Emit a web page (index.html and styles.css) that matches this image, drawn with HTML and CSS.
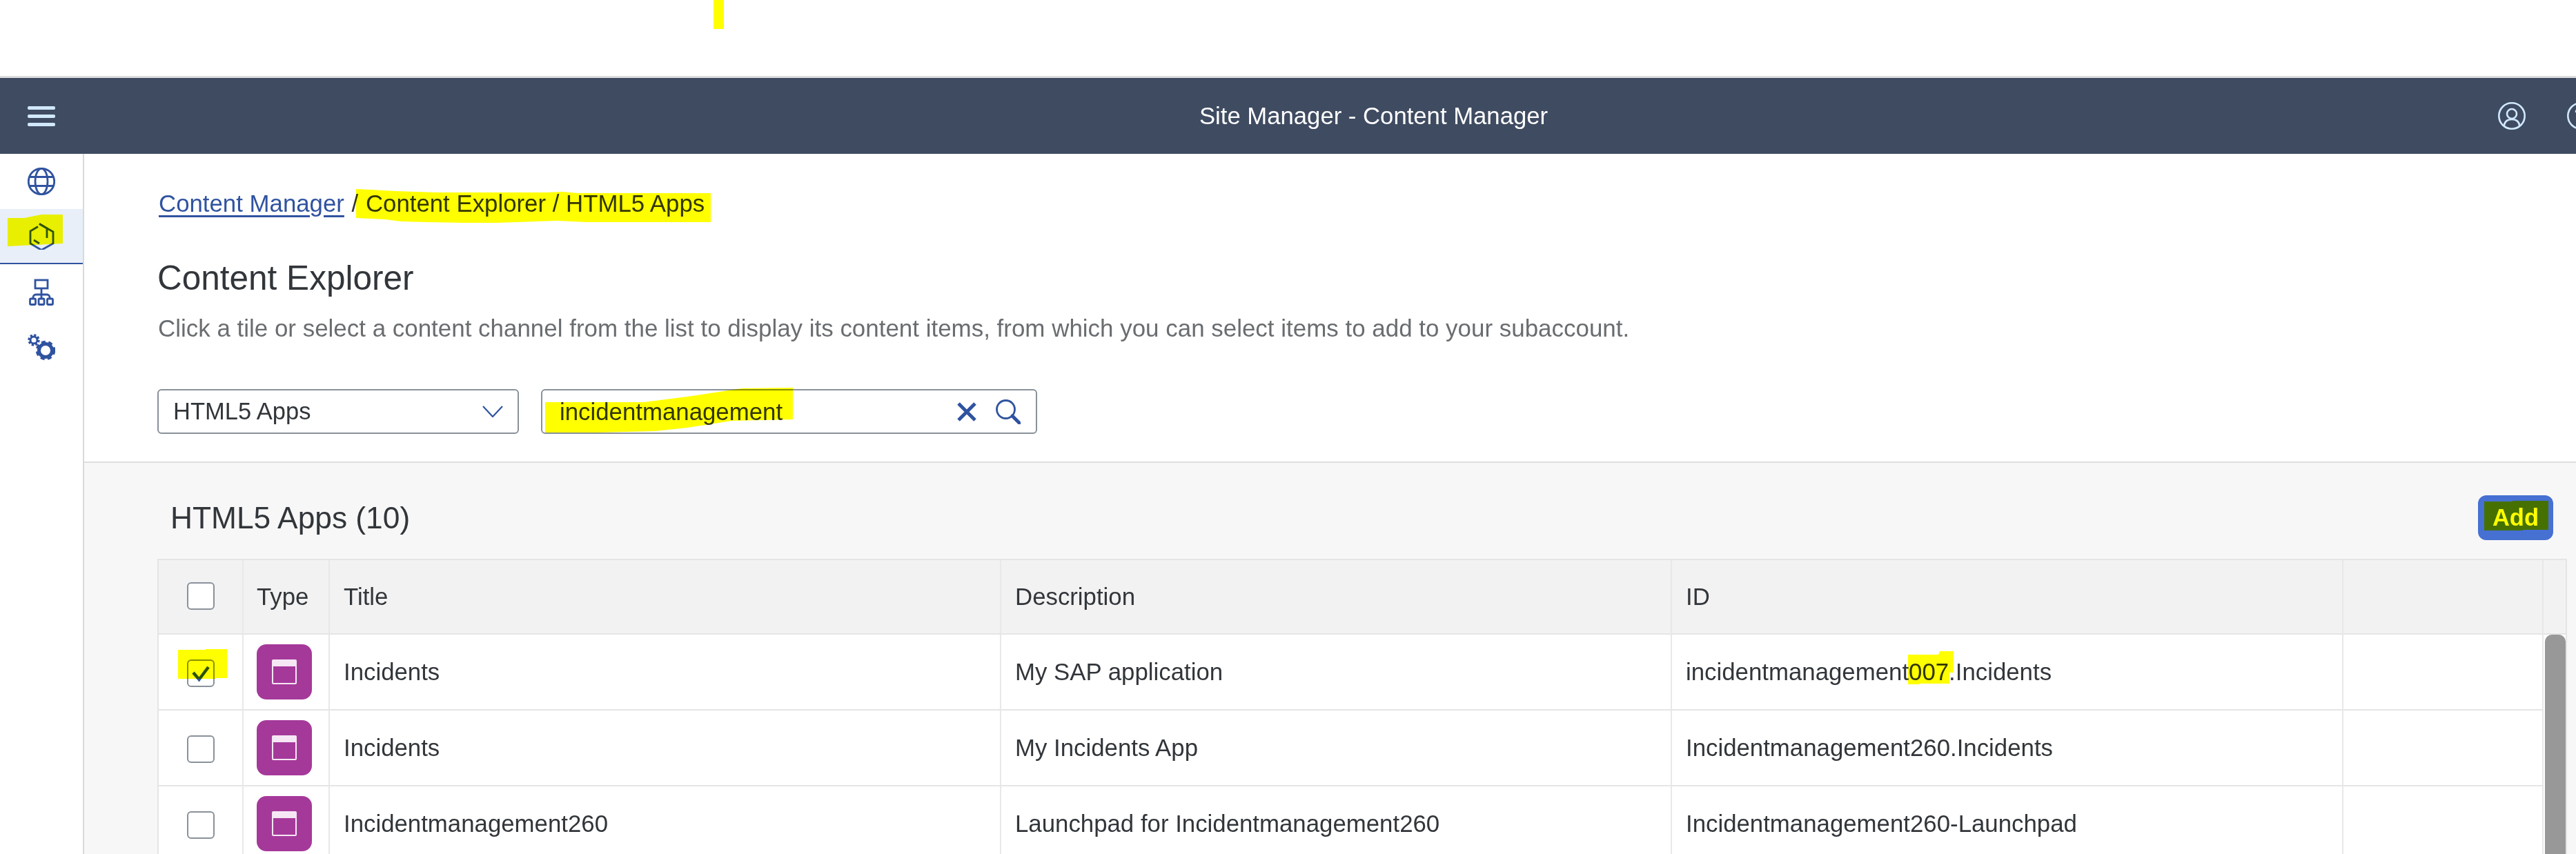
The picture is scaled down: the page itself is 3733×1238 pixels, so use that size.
FILE: index.html
```html
<!DOCTYPE html>
<html lang="en">
<head>
<meta charset="utf-8">
<title>Site Manager - Content Manager</title>
<link rel="stylesheet" href="styles.css">
</head>
<body>
<div class="page">
  <div class="top-band"></div>
  <header class="shell">
    <div class="hamburger"><span></span><span></span><span></span></div>
    <div class="shell-title">Site Manager - Content Manager</div>
    <svg class="shell-user" viewBox="0 0 40 40" width="40" height="40"><circle cx="20" cy="20" r="18.7"/><circle cx="20" cy="17" r="7"/><path d="M8.5 35c1-7 5.500-10 11.500-10s10.500 3 11.500 10"/></svg>
    <svg class="shell-help" viewBox="0 0 40 40" width="40" height="40"><circle cx="20" cy="20" r="18.700"/><path d="M13 15c0-4 3-7 7-7s7 3 7 7-7 5-7 11"/><circle cx="20" cy="31" r="1"/></svg>
  </header>
  <div class="main">
    <nav class="side">
      <div class="side-item first">
        <svg class="ico" viewBox="0 0 40 40" width="40" height="40"><circle cx="20" cy="20" r="18.700"/><ellipse cx="20" cy="20" rx="9" ry="18.700"/><path d="M2 13.500h36M2 26.500h36"/></svg>
      </div>
      <div class="side-item active">
        <svg class="ico" viewBox="0 0 40 40" width="40" height="40"><path d="M17 2.500 37 14v17L20 40.500 4 31V13l11-6.500"/><path d="M17 2.500 28 9v14M9 26l8 5"/></svg>
      </div>
      <div class="side-item org">
        <svg class="ico" viewBox="0 0 40 40" width="40" height="40"><rect x="11" y="2" width="18" height="12"/><path d="M20 14v9M8 30v-3a4 4 0 0 1 4-4h16a4 4 0 0 1 4 4v3M20 23v7"/><rect x="3.500" y="29" width="8" height="8.500" rx="1.500"/><rect x="16" y="29" width="8" height="8.500" rx="1.500"/><rect x="28.500" y="29" width="8" height="8.500" rx="1.500"/></svg>
      </div>
      <div class="side-item gears">
        <svg class="ico" viewBox="0 0 40 40" width="40" height="40"><circle class="g1" cx="9" cy="10" r="5"/><circle class="t1" cx="9" cy="10" r="7.200"/><circle class="g2" cx="26" cy="25" r="9.500"/><circle class="t2" cx="26" cy="25" r="12.500"/></svg>
      </div>
    </nav>
    <div class="content">
      <section class="intro">
        <div class="crumbs"><a class="crumb-link" href="#">Content Manager</a> <span class="crumb-sep">/</span> <span class="crumb-cur">Content Explorer / HTML5 Apps</span></div>
        <h1 class="page-title">Content Explorer</h1>
        <p class="page-sub">Click a tile or select a content channel from the list to display its content items, from which you can select items to add to your subaccount.</p>
        <div class="controls">
          <div class="field select">
            <span>HTML5 Apps</span>
            <svg class="chev" viewBox="0 0 30 17" width="30" height="17"><path d="M1 1l14 15L29 1"/></svg>
          </div>
          <div class="field search">
            <span class="search-text">incidentmanagement</span>
            <svg class="clear" viewBox="0 0 28 28" width="28" height="28"><path d="M2 2l24 24M26 2 2 26"/></svg>
            <svg class="mag" viewBox="0 0 36 36" width="36" height="36"><circle cx="14.500" cy="14.500" r="13"/><path class="handle" d="M24 24l10 10"/></svg>
          </div>
        </div>
      </section>
      <section class="panel">
        <div class="panel-head">
          <h2 class="panel-title">HTML5 Apps (10)</h2>
          <button class="add" type="button">Add</button>
        </div>
        <div class="table-box">
          <table class="apps">
            <colgroup><col class="c1"><col class="c2"><col class="c3"><col class="c4"><col class="c5"><col class="c6"></colgroup>
            <thead>
              <tr><th><span class="cb"></span></th><th>Type</th><th>Title</th><th>Description</th><th>ID</th><th></th></tr>
            </thead>
            <tbody>
              <tr>
                <td><span class="cb"><svg viewBox="0 0 36 36" width="36" height="36"><path d="M7 17l8.500 10L29 9"/></svg></span></td>
                <td><span class="tile"><span class="win"></span></span></td>
                <td>Incidents</td><td>My SAP application</td><td>incidentmanagement007.Incidents</td><td></td>
              </tr>
              <tr>
                <td><span class="cb"></span></td>
                <td><span class="tile"><span class="win"></span></span></td>
                <td>Incidents</td><td>My Incidents App</td><td>Incidentmanagement260.Incidents</td><td></td>
              </tr>
              <tr>
                <td><span class="cb"></span></td>
                <td><span class="tile"><span class="win"></span></span></td>
                <td>Incidentmanagement260</td><td>Launchpad for Incidentmanagement260</td><td>Incidentmanagement260-Launchpad</td><td></td>
              </tr>
            </tbody>
          </table>
          <div class="scroll"><div class="scroll-head"></div><div class="thumb"></div></div>
        </div>
      </section>
    </div>
  </div>
  <svg class="marks" viewBox="0 0 3733 1238" width="3733" height="1238">
    <rect x="1034" y="0" width="15" height="42"/>
    <polygon points="516,274 538,275 573,277 633,279 791,279 815,278 838,280 1030,280 1030,322 850,322 807,320 720,323 672,323 617,322 581,321 558,318 516,316"/>
    <polygon points="11,316 35,316 60,311 91,311 91,353 11,357"/>
    <polygon points="790,583 933,583 996,575 1075,563 1149,562 1149,608 1060,610 996,620 949,625 866,627 790,627"/>
    <polygon points="258,942 298,942 298,941 329,941 329,983 313,983 313,984 258,984"/>
    <polygon points="3600,727 3641,727 3641,726 3693,726 3693,768 3656,768 3656,769 3600,769"/>
    <polygon points="2765,949 2809,949 2811,944 2831,944 2831,975 2825,975 2825,991 2782,991 2782,992 2765,992"/>
  </svg>
</div>
</body>
</html>
```

FILE: styles.css
```css
* { box-sizing: border-box; }
html, body { margin: 0; padding: 0; background: #fff; }
body { font-family: "Liberation Sans", Arial, sans-serif; font-size: 34.8px; color: #32363a; }
.page { position: relative; width: 3733px; height: 1238px; overflow: hidden; }
.top-band { height: 113px; border-bottom: 3px solid #dedede; }
.shell { position: relative; height: 110px; padding-left: 248px; background: #3f4b61; display: flex; align-items: center; justify-content: center; }
.hamburger { position: absolute; left: 40px; top: 41px; width: 40px; display: flex; flex-direction: column; gap: 7px; }
.hamburger span { display: block; height: 5px; border-radius: 2px; background: #d1e8ff; }
.shell-title { color: #fff; font-size: 34.7px; }
.shell-user, .shell-help { position: absolute; top: 35px; fill: none; stroke: #d1e8ff; stroke-width: 2.6; }
.shell-user { left: 3620px; }
.shell-help { left: 3720px; }
.main { display: flex; height: 1015px; }
.side { width: 122px; flex: none; border-right: 2px solid #d9d9d9; }
.side-item { display: flex; align-items: center; justify-content: center; width: 120px; }
.side-item.first { height: 80px; }
.side-item.active { height: 80px; background: #e8eff8; border-bottom: 2px solid #3053a0; }
.side-item.org { height: 82px; }
.side-item.gears { height: 76px; }
.ico { fill: none; stroke: #3053a0; stroke-width: 2.8; }
.ico .g1 { stroke-width: 3; }
.ico .t1 { stroke-width: 3; stroke-dasharray: 3.200 2.450; }
.ico .g2 { stroke-width: 5; }
.ico .t2 { stroke-width: 3.500; stroke-dasharray: 6 4.470; }
.content { flex: 1; min-width: 0; display: flex; flex-direction: column; }
.intro { padding: 52px 0 40px 108px; }
.crumbs { line-height: 40px; height: 40px; }
.crumb-link { color: #3053a0; text-decoration: underline; text-underline-offset: 5px; }
.crumb-sep { margin: 0 1px; }
.page-title { margin: 58px 0 0 -2px; font-size: 49.500px; font-weight: 400; line-height: 60px; }
.page-sub { margin: 23px 0 0 -1px; font-size: 34.95px; line-height: 40px; color: #6a6d70; white-space: nowrap; }
.controls { margin-top: 68px; margin-left: -2px; display: flex; gap: 32px; }
.field { height: 65px; background: #fff; border: 2px solid #89919a; border-radius: 6px; display: flex; align-items: center; font-size: 34.500px; }
.select { width: 524px; padding: 0 21px; justify-content: space-between; }
.chev { fill: none; stroke: #3053a0; stroke-width: 2.2; }
.search { width: 719px; padding: 0 22px 0 25px; font-size: 34.8px; }
.search-text { flex: 1; }
.clear { fill: none; stroke: #3053a0; stroke-width: 5; margin-right: 28px; }
.mag { fill: none; stroke: #3053a0; stroke-width: 2.800; }
.mag .handle { stroke-width: 5; stroke-linecap: round; }
.panel { flex: 1; border-top: 2px solid #dedede; background: #f7f7f7; padding-left: 106px; padding-right: 13px; }
.panel-head { height: 139px; padding: 47px 20px 27px 19px; display: flex; justify-content: space-between; align-items: center; }
.panel-title { margin: 0; font-size: 44.300px; font-weight: 400; line-height: 60px; }
.add { width: 109px; height: 65px; border: 0; border-radius: 12px; background: #4670d2; color: #fff; font: 700 34.500px "Liberation Sans", Arial, sans-serif; padding: 0; }
.table-box { display: flex; border: 2px solid #e5e5e5; border-bottom: 0; height: 428px; background: #fff; }
.apps { width: 3456px; flex: none; table-layout: fixed; border-collapse: separate; border-spacing: 0; font-size: 34.8px; }
.c1 { width: 123px; } .c2 { width: 125px; } .c3 { width: 973px; } .c4 { width: 972px; } .c5 { width: 973px; } .c6 { width: 290px; }
.apps th, .apps td { padding: 0 0 0 20px; text-align: left; font-weight: 400; border-right: 2px solid #e8e8e8; border-bottom: 2px solid #e5e5e5; white-space: nowrap; }
.apps th:first-child { padding: 0 0 4px; text-align: center; }
.apps td:first-child { padding: 2px 0 0 1px; text-align: center; }
.apps th { height: 108px; background: #f2f2f2; }
.apps td { height: 110px; }
.apps td:nth-child(2), .apps th:nth-child(2) { padding-left: 19px; }
.cb { display: inline-flex; align-items: center; justify-content: center; width: 40px; height: 40px; border: 2px solid #89919a; border-radius: 6px; background: #fff; vertical-align: middle; }
.cb svg { fill: none; stroke: #3053a0; stroke-width: 4.500; }
.tile { display: flex; align-items: center; justify-content: center; width: 80px; height: 80px; border-radius: 14px; background: #a5399a; }
.win { display: block; width: 36px; height: 36px; border: 2px solid #f6e7f4; border-top-width: 10px; border-radius: 2px; }
.scroll { flex: 1; min-width: 0; }
.scroll-head { height: 108px; border-bottom: 2px solid #e5e5e5; background: #f2f2f2; }
.thumb { margin-left: 2px; height: 400px; background: #989898; border-radius: 10px 10px 0 0; }
.marks { position: absolute; left: 0; top: 0; fill: #ffff00; mix-blend-mode: multiply; pointer-events: none; }
```
